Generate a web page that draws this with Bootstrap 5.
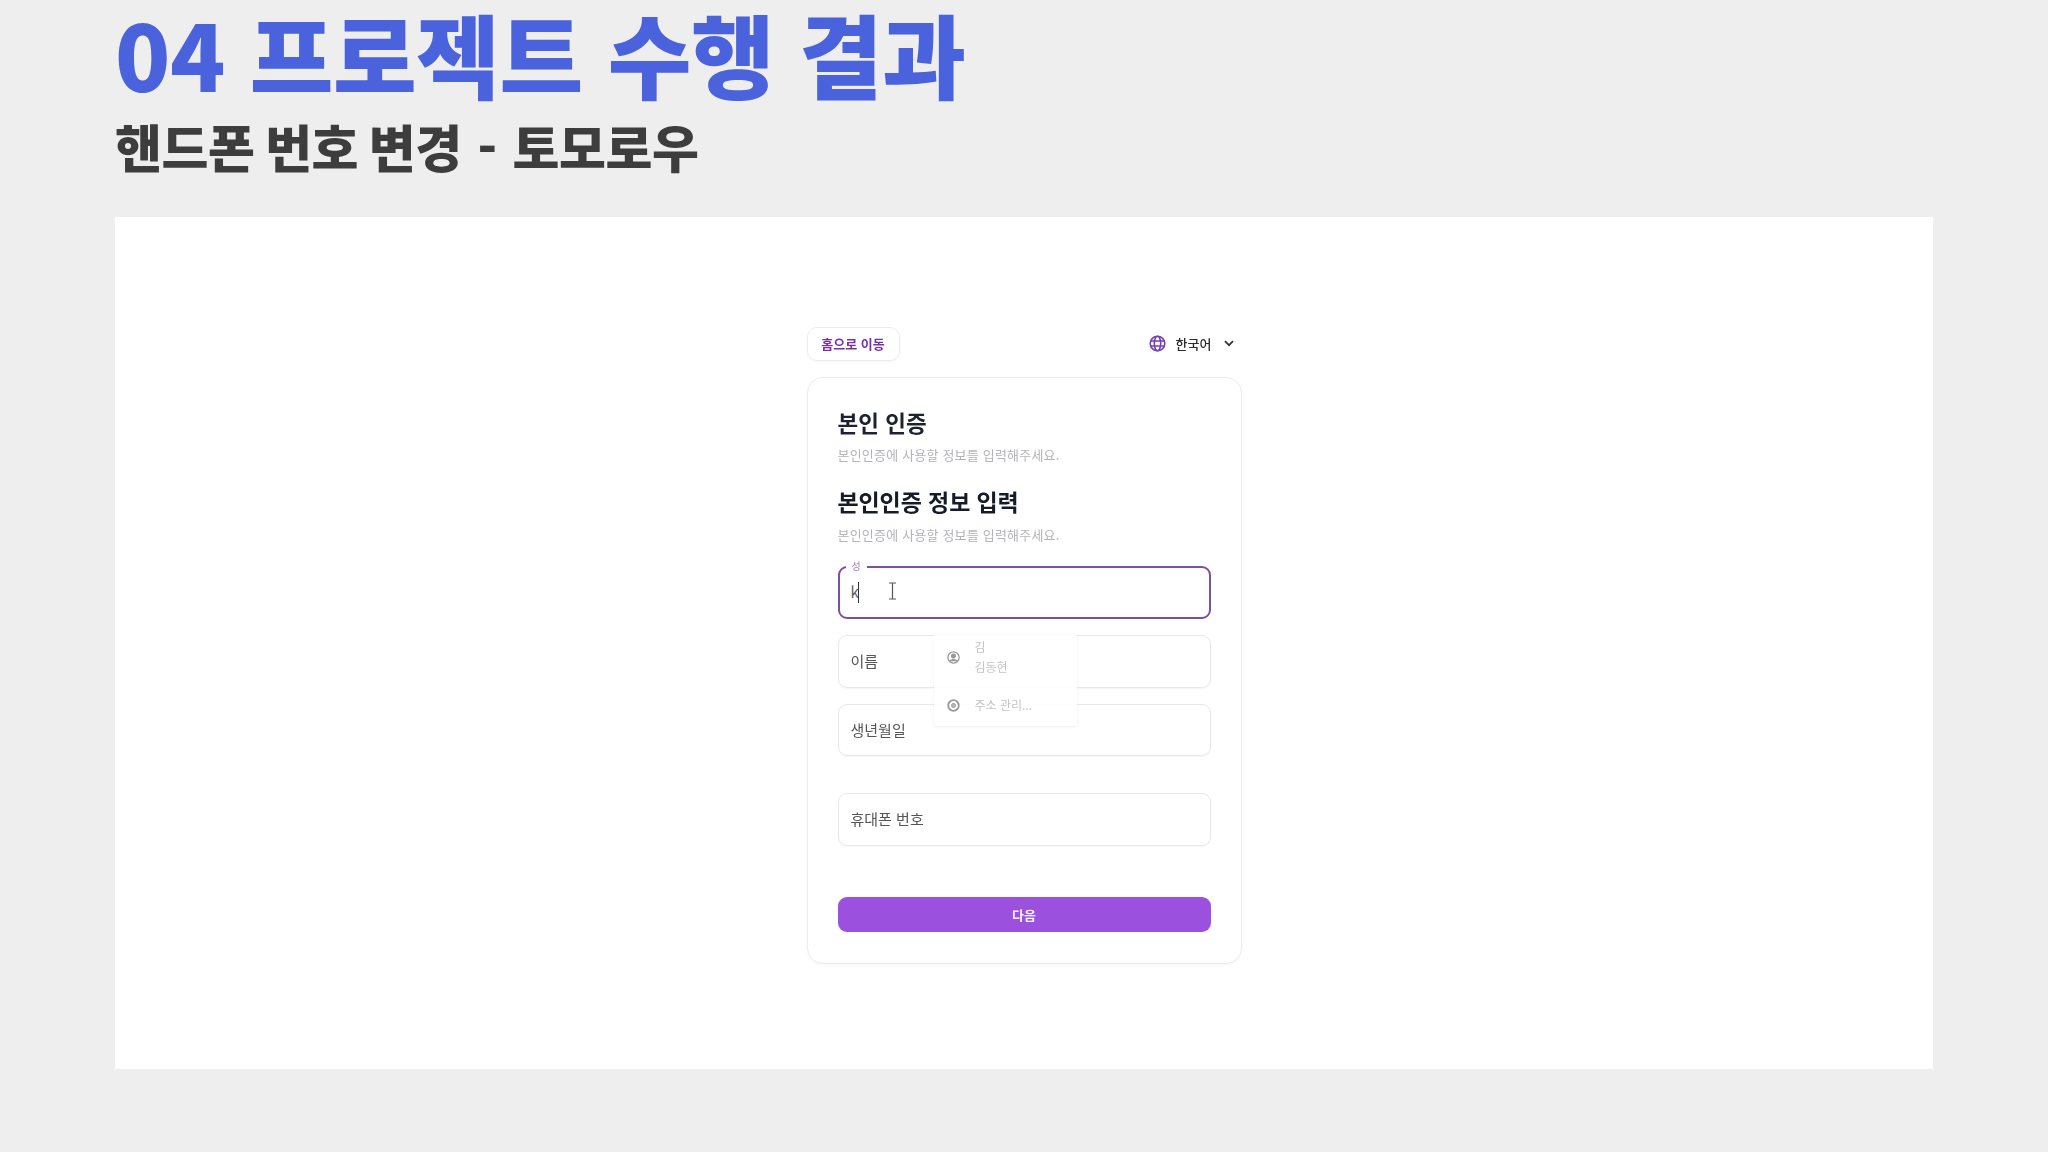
<!DOCTYPE html>
<html lang="ko">
<head>
<meta charset="utf-8">
<title>04 프로젝트 수행 결과</title>
<link href="https://cdn.jsdelivr.net/npm/bootstrap@5.3.0/dist/css/bootstrap.min.css" rel="stylesheet">
<style>
html,body{height:100%}
body{background:#eeeeef;font-family:"Noto Sans CJK KR","Noto Sans",sans-serif;overflow:hidden}
.slide-head{padding:0 115px;height:217px}
.slide-title{font-family:"Noto Sans CJK KR",sans-serif;font-weight:900;font-size:91px;line-height:92px;color:#4a62dc;margin:0;padding-top:6px;white-space:nowrap;letter-spacing:-.5px}
.slide-sub{font-family:"Noto Sans CJK KR",sans-serif;font-weight:900;font-size:51px;line-height:60px;color:#3d3d3d;margin:18px 0 0;white-space:nowrap;letter-spacing:-.47px;word-spacing:-3px}
.slide-dash{display:inline-block;margin:0 5px}
.sheet{margin:0 115px;height:852px;background:#fff;padding-top:110px}
.auth-col{width:435px;filter:blur(.35px)}
.home-btn{height:34px;width:93px;padding:0 0 2px;border:1px solid #eeeaf2;border-radius:10px;background:#fff;color:#7b2fa8;font-size:13px;font-weight:700;box-shadow:0 1px 2px rgba(0,0,0,.04);line-height:1}
.lang-pick{color:#2b2b2b;font-size:13px;font-weight:500;padding-right:8px;padding-bottom:2px;line-height:1}
.lang-name{margin-left:10px}
.lang-caret{margin-left:12px}
.auth-card{margin-top:16px;height:587px;border:1px solid #ebebf0;border-radius:16px;padding:29px 30px 0;box-shadow:0 1px 3px rgba(0,0,0,.04)}
.auth-h1{font-size:22.5px;line-height:30px;font-weight:700;color:#1c2230;margin:0}
.auth-h2{font-size:23px;line-height:30px;font-weight:700;color:#151b29;margin:22px 0 0;letter-spacing:-.1px}
.auth-p{font-size:13px;line-height:18px;color:#b4b4b8;margin:9px 0 0;letter-spacing:.2px}
.auth-p-2{margin-top:10px}
.fld{height:52.5px;border:1px solid #e8e6ee;border-radius:9px;padding:0 12px;font-size:15px;color:#555;display:flex;align-items:center;box-shadow:0 1px 2px rgba(0,0,0,.04);background:#fff}
.fld-active{height:53px;border:2px solid #7d4f9e;padding:0 11px;color:#5d5d5d;box-shadow:none;position:relative;margin-top:22px}
.fld-label{position:absolute;left:6px;top:-9px;padding:0 6px;background:#fff;font-size:10px;line-height:14px;color:#a27bbd}
.caret-bar{display:inline-block;width:1.5px;height:21px;background:#333;margin-left:-1px}
.ibeam{position:absolute;left:48px;top:14px}
.fld-gap1{margin-top:16px}
.fld-gap2{margin-top:16px}
.fld-gap3{margin-top:37px}
.next-btn{margin-top:51px;height:35px;width:100%;padding:0;border:0;border-radius:9px;background:#9b51dd;color:#fdf5ff;font-size:13px;font-weight:700;line-height:1}
.form-zone{position:relative}
.auto-pop{position:absolute;left:96px;top:68px;width:143px;height:92px;background:rgba(255,255,255,.9);box-shadow:0 1px 3px rgba(0,0,0,.07);border-radius:3px;font-size:12px;color:#c4c4c4;z-index:3}
.auto-row{position:absolute;left:13px;display:flex;gap:15px;align-items:center}
.auto-row-a{top:3px}
.auto-row-b{top:61px}
.auto-lines{line-height:20px}
</style>
</head>
<body>
<header class="slide-head">
  <h1 class="slide-title">04 프로젝트 수행 결과</h1>
  <h2 class="slide-sub">핸드폰 번호 변경 <span class="slide-dash">-</span> 토모로우</h2>
</header>
<main class="sheet d-flex justify-content-center">
  <div class="auth-col">
    <div class="d-flex justify-content-between align-items-center">
      <button type="button" class="btn home-btn">홈으로 이동</button>
      <div class="lang-pick d-flex align-items-center">
        <svg width="17" height="17" viewBox="0 0 17 17" fill="none" stroke="#7b3fb5" stroke-width="1.6"><circle cx="8.5" cy="8.5" r="7.3"/><ellipse cx="8.5" cy="8.5" rx="3.2" ry="7.3"/><path d="M1.5 6h14M1.5 11h14"/></svg>
        <span class="lang-name">한국어</span>
        <svg class="lang-caret" width="10" height="7" viewBox="0 0 10 7" fill="none" stroke="#333" stroke-width="1.7"><path d="M1 1.2l4 4 4-4"/></svg>
      </div>
    </div>
    <section class="auth-card">
      <h3 class="auth-h1">본인 인증</h3>
      <p class="auth-p">본인인증에 사용할 정보를 입력해주세요.</p>
      <h3 class="auth-h2">본인인증 정보 입력</h3>
      <p class="auth-p auth-p-2">본인인증에 사용할 정보를 입력해주세요.</p>
      <div class="form-zone">
        <div class="fld fld-active">
          <span class="fld-label">성</span>
          <span>k</span><span class="caret-bar"></span>
          <svg class="ibeam" width="9" height="18" viewBox="0 0 9 18" fill="none" stroke="#555" stroke-width="1.2"><path d="M1 1h7M1 17h7M4.5 1v16"/></svg>
        </div>
        <div class="fld fld-gap1">이름</div>
        <div class="fld fld-gap2">생년월일</div>
        <div class="fld fld-gap3">휴대폰 번호</div>
        <div class="auto-pop">
          <div class="auto-row auto-row-a">
            <svg width="13" height="13" viewBox="0 0 13 13" fill="none" stroke="#999" stroke-width="1.3"><circle cx="6.5" cy="6.5" r="5.6"/><circle cx="6.5" cy="5" r="1.9" fill="#999"/><path d="M2.8 10.2c1-2 6.400-2 7.400 0" fill="#999"/></svg>
            <div class="auto-lines"><div>김</div><div>김동현</div></div>
          </div>
          <div class="auto-row auto-row-b">
            <svg width="13" height="13" viewBox="0 0 13 13" fill="none" stroke="#999" stroke-width="1.8"><circle cx="6.5" cy="6.5" r="5.3"/><circle cx="6.5" cy="6.5" r="2" fill="#bbb" stroke-width="1"/></svg>
            <div class="auto-lines">주소 관리...</div>
          </div>
        </div>
      </div>
      <button type="button" class="btn next-btn">다음</button>
    </section>
  </div>
</main>
<script src="https://cdn.jsdelivr.net/npm/bootstrap@5.3.0/dist/js/bootstrap.bundle.min.js"></script>
</body>
</html>
